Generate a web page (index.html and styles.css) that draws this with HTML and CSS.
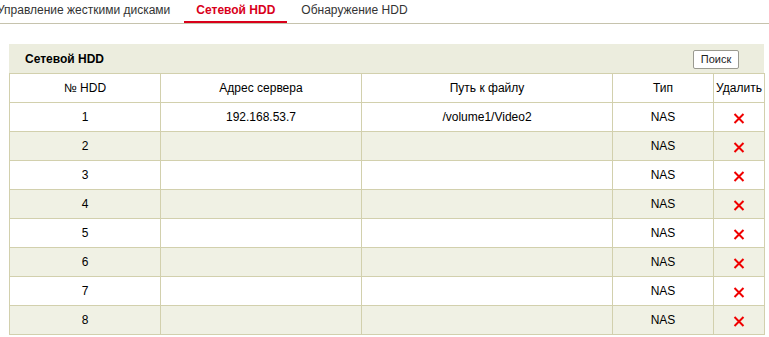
FILE: index.html
```html
<!DOCTYPE html>
<html lang="ru">
<head>
<meta charset="utf-8">
<title>Сетевой HDD</title>
<link rel="stylesheet" href="styles.css">
</head>
<body>
<nav class="tabs">
  <a class="tab tab-first">Управление жесткими дисками</a>
  <a class="tab tab-active">Сетевой HDD</a>
  <a class="tab tab-last">Обнаружение HDD</a>
</nav>
<section class="panel">
  <header class="panel-head">
    <span class="panel-title">Сетевой HDD</span>
    <button class="btn">Поиск</button>
  </header>
  <table class="grid">
    <colgroup>
      <col class="c1"><col class="c2"><col class="c3"><col class="c4"><col class="c5">
    </colgroup>
    <thead>
      <tr><th>№ HDD</th><th>Адрес сервера</th><th>Путь к файлу</th><th>Тип</th><th>Удалить</th></tr>
    </thead>
    <tbody>
      <tr><td>1</td><td>192.168.53.7</td><td>/volume1/Video2</td><td>NAS</td><td><svg class="del" viewBox="0 0 12 11"><path d="M1.5 1L10.5 10M10.5 1L1.5 10"/></svg></td></tr>
      <tr><td>2</td><td></td><td></td><td>NAS</td><td><svg class="del" viewBox="0 0 12 11"><path d="M1.5 1L10.5 10M10.5 1L1.5 10"/></svg></td></tr>
      <tr><td>3</td><td></td><td></td><td>NAS</td><td><svg class="del" viewBox="0 0 12 11"><path d="M1.5 1L10.5 10M10.5 1L1.5 10"/></svg></td></tr>
      <tr><td>4</td><td></td><td></td><td>NAS</td><td><svg class="del" viewBox="0 0 12 11"><path d="M1.5 1L10.5 10M10.5 1L1.5 10"/></svg></td></tr>
      <tr><td>5</td><td></td><td></td><td>NAS</td><td><svg class="del" viewBox="0 0 12 11"><path d="M1.5 1L10.5 10M10.5 1L1.5 10"/></svg></td></tr>
      <tr><td>6</td><td></td><td></td><td>NAS</td><td><svg class="del" viewBox="0 0 12 11"><path d="M1.5 1L10.5 10M10.5 1L1.5 10"/></svg></td></tr>
      <tr><td>7</td><td></td><td></td><td>NAS</td><td><svg class="del" viewBox="0 0 12 11"><path d="M1.5 1L10.5 10M10.5 1L1.5 10"/></svg></td></tr>
      <tr><td>8</td><td></td><td></td><td>NAS</td><td><svg class="del" viewBox="0 0 12 11"><path d="M1.5 1L10.5 10M10.5 1L1.5 10"/></svg></td></tr>
    </tbody>
  </table>
</section>
</body>
</html>
```

FILE: styles.css
```css
html, body {
  margin: 0;
  padding: 0;
  background: #ffffff;
  overflow: hidden;
}
body {
  font-family: "Liberation Sans", Arial, sans-serif;
  font-size: 12px;
  color: #000;
}
.tabs {
  display: flex;
  height: 23px;
  border-bottom: 1px solid #c6c3ad;
  white-space: nowrap;
}
.tab {
  display: block;
  flex: none;
  padding: 3px 12px 0;
  font-size: 12px;
  color: #333;
  line-height: 15px;
  box-sizing: border-box;
  height: 23px;
}
.tab-first {
  margin-left: -15px;
  padding-right: 14px;
}
.tab-last {
  padding-left: 14px;
}
.tab-active {
  color: #d9001b;
  font-weight: bold;
  border-bottom: 2px solid #d9001b;
}
.panel {
  margin: 20px 0 0 9px;
  width: 755px;
}
.panel-head {
  display: flex;
  align-items: center;
  justify-content: space-between;
  height: 29px;
  background: #ecedde;
  padding: 0 25px 0 16px;
}
.panel-title {
  font-weight: bold;
  font-size: 12px;
  padding-top: 1px;
}
.btn {
  font-family: "Liberation Sans", Arial, sans-serif;
  font-size: 11px;
  color: #222;
  background: #fff;
  border: 1px solid #9a9a90;
  border-radius: 2px;
  width: 46px;
  height: 19px;
  padding: 0;
  margin-top: 1px;
}
.grid {
  width: 755px;
  border-collapse: collapse;
  table-layout: fixed;
}
.c1 { width: 151px; }
.c2 { width: 201px; }
.c3 { width: 251px; }
.c4 { width: 101px; }
.c5 { width: 51px; }
.grid th, .grid td {
  border: 1px solid #d2d0ad;
  height: 28px;
  padding: 0;
  text-align: center;
  font-weight: normal;
  font-size: 12px;
  white-space: nowrap;
}
.grid tbody tr:nth-child(even) td {
  background: #f0f1e4;
}
.del {
  width: 12px;
  height: 11px;
  display: inline-block;
  vertical-align: middle;
  margin-top: 2px;
}
.del path {
  stroke: #f00000;
  stroke-width: 2;
  fill: none;
}
```
